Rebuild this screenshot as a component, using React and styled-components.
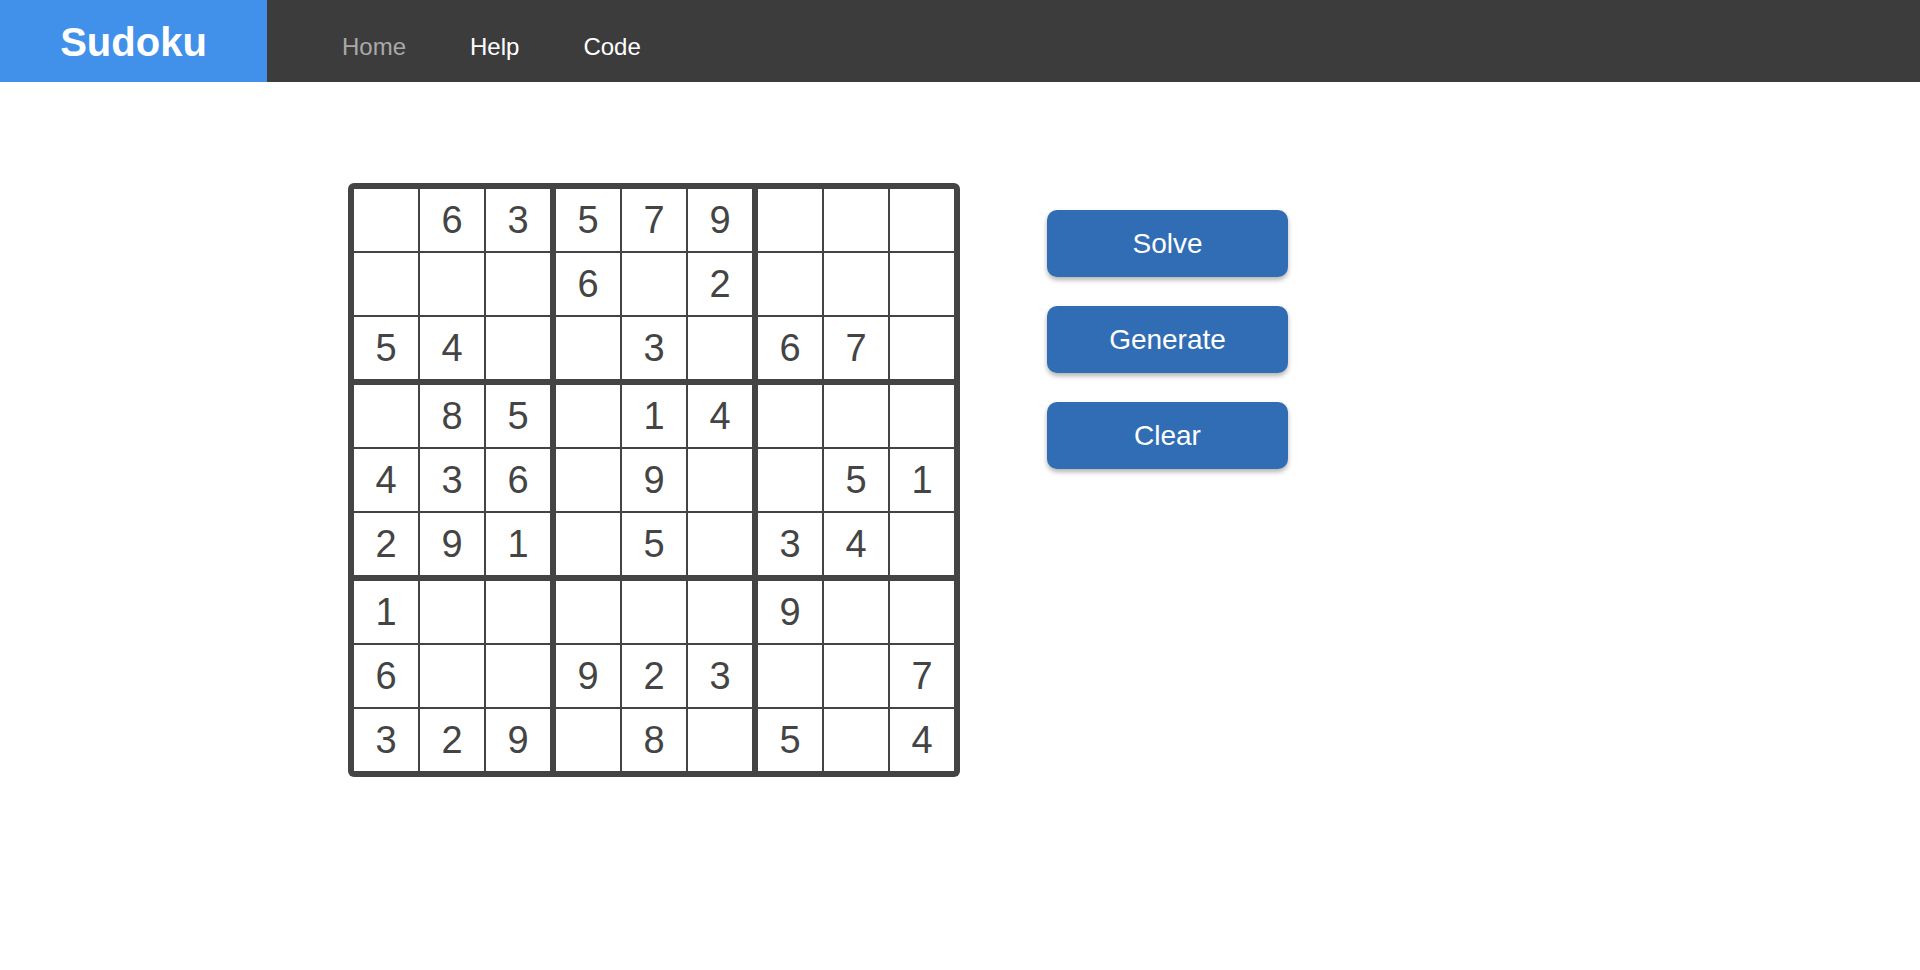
import React from "react";
import styled, { createGlobalStyle } from "styled-components";

const GlobalStyle = createGlobalStyle`
  html, body {
    margin: 0;
    padding: 0;
    background: #ffffff;
    font-family: "Liberation Sans", Arial, sans-serif;
  }
`;

const Header = styled.header`
  display: flex;
  align-items: stretch;
  height: 82px;
  background: #3c3c3c;
`;

const Logo = styled.div`
  width: 267px;
  display: flex;
  align-items: center;
  justify-content: center;
  background: #4191ea;
  color: #ffffff;
  font-weight: bold;
  font-size: 40px;
  padding-top: 2px;
  box-sizing: border-box;
`;

const Nav = styled.nav`
  display: flex;
  align-items: center;
  gap: 64px;
  padding-left: 75px;
  padding-top: 11px;
`;

const NavLink = styled.a`
  font-size: 24px;
  color: ${(p) => (p.$active ? "#a9a9a9" : "#ffffff")};
  text-decoration: none;
  cursor: pointer;
`;

const Main = styled.main`
  display: flex;
  align-items: flex-start;
  gap: 87px;
  padding: 101px 0 0 348px;
`;

const Board = styled.div`
  display: grid;
  grid-template-columns: repeat(3, auto);
  gap: 6px;
  padding: 6px;
  background: #444444;
  border-radius: 6px;
`;

const Box = styled.div`
  display: grid;
  grid-template-columns: repeat(3, 64px);
  grid-template-rows: repeat(3, 62px);
  gap: 2px;
  background: #444444;
`;

const Cell = styled.div`
  background: #ffffff;
  display: flex;
  align-items: center;
  justify-content: center;
  font-size: 38px;
  color: #444444;
  box-sizing: border-box;
`;

const Actions = styled.div`
  display: flex;
  flex-direction: column;
  gap: 29px;
  margin-top: 27px;
`;

const Button = styled.button`
  width: 241px;
  height: 67px;
  border: none;
  border-radius: 10px;
  background: #306db4;
  color: #ffffff;
  font-family: "Liberation Sans", Arial, sans-serif;
  font-size: 28px;
  box-shadow: 0 3px 5px rgba(0, 0, 0, 0.3);
  cursor: pointer;
`;

const puzzle = [
  "063579000",
  "000602000",
  "540030670",
  "085014000",
  "436090051",
  "291050340",
  "100000900",
  "600923007",
  "329080504",
];

function cellValue(r, c) {
  const ch = puzzle[r][c];
  return ch === "0" ? "" : ch;
}

export default function App() {
  const boxes = [];
  for (let br = 0; br < 3; br++) {
    for (let bc = 0; bc < 3; bc++) {
      const cells = [];
      for (let r = 0; r < 3; r++) {
        for (let c = 0; c < 3; c++) {
          const rr = br * 3 + r;
          const cc = bc * 3 + c;
          cells.push(<Cell key={`${rr}-${cc}`}>{cellValue(rr, cc)}</Cell>);
        }
      }
      boxes.push(<Box key={`${br}-${bc}`}>{cells}</Box>);
    }
  }

  return (
    <>
      <GlobalStyle />
      <Header>
        <Logo>Sudoku</Logo>
        <Nav>
          <NavLink $active>Home</NavLink>
          <NavLink>Help</NavLink>
          <NavLink>Code</NavLink>
        </Nav>
      </Header>
      <Main>
        <Board>{boxes}</Board>
        <Actions>
          <Button>Solve</Button>
          <Button>Generate</Button>
          <Button>Clear</Button>
        </Actions>
      </Main>
    </>
  );
}
